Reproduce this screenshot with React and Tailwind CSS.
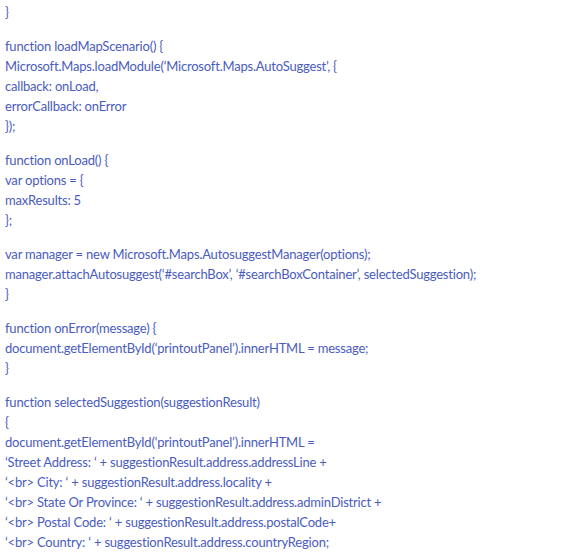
const blocks = [
  ['}'],
  ['function loadMapScenario() {', "Microsoft.Maps.loadModule(‘Microsoft.Maps.AutoSuggest’, {", 'callback: onLoad,', 'errorCallback: onError', '});'],
  ['function onLoad() {', 'var options = {', 'maxResults: 5', '};'],
  ['var manager = new Microsoft.Maps.AutosuggestManager(options);', "manager.attachAutosuggest(‘#searchBox’, ‘#searchBoxContainer’, selectedSuggestion);", '}'],
  ['function onError(message) {', "document.getElementById(‘printoutPanel’).innerHTML = message;", '}'],
  ['function selectedSuggestion(suggestionResult)', '{', "document.getElementById(‘printoutPanel’).innerHTML =", "‘Street Address: ‘ + suggestionResult.address.addressLine +", "‘<br> City: ‘ + suggestionResult.address.locality +", "‘<br> State Or Province: ‘ + suggestionResult.address.adminDistrict +", "‘<br> Postal Code: ‘ + suggestionResult.address.postalCode+", "‘<br> Country: ‘ + suggestionResult.address.countryRegion;"],
];

export default function App() {
  return (
    <div className="bg-white w-[585px] h-[552px] overflow-hidden px-[5px] pt-[2px] text-[13px] leading-[20px] text-[#4a5cc0] font-[Lato,sans-serif] tracking-[-0.2px] flex flex-col gap-[14px]">
      {blocks.map((lines, i) => (
        <p key={i}>
          {lines.map((l, j) => (
            <span key={j} className="block whitespace-pre">{l}</span>
          ))}
        </p>
      ))}
    </div>
  );
}
